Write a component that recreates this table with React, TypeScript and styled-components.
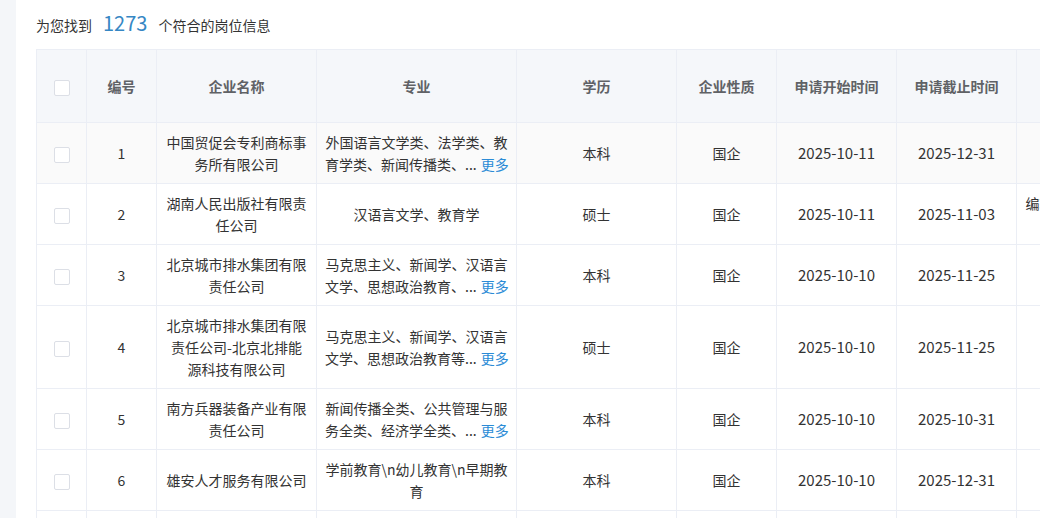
import React from "react";
import styled, { createGlobalStyle } from "styled-components";

const Global = createGlobalStyle`
  html, body { margin: 0; padding: 0; background: #f4f6f9; overflow: hidden; }
  body { font-family: "Noto Sans CJK SC", "Noto Sans", sans-serif; }
`;

const Page = styled.div`
  display: flex;
  width: 1040px;
  height: 518px;
  overflow: hidden;
  background: #f4f6f9;
`;

const Panel = styled.main`
  margin-left: 16px;
  flex: 1;
  min-width: 0;
  background: #fff;
  padding: 14px 0 0 20px;
  overflow: hidden;
`;

const Summary = styled.div`
  display: flex;
  align-items: center;
  height: 22px;
  margin-bottom: 13px;
  font-size: 14px;
  color: #333;
  white-space: nowrap;
`;

const Count = styled.span`
  font-size: 20px;
  color: #3687c4;
  margin: 0 11px 0 11px;
  line-height: 22px;
  position: relative;
  top: -2px;
`;

const Table = styled.table`
  border-collapse: collapse;
  table-layout: fixed;
  width: 1180px;
  font-size: 14px;
  color: #333;
`;

const Th = styled.th`
  height: 72px;
  padding: 0 8px;
  background: #f5f7fa;
  border: 1px solid #ebeef5;
  color: #606266;
  font-weight: bold;
  text-align: center;
  vertical-align: middle;
  white-space: nowrap;
  overflow: hidden;
`;

const Tr = styled.tr<{ $shade?: boolean }>`
  background: ${(p) => (p.$shade ? "#fafafa" : "#fff")};
`;

const Td = styled.td<{ $align?: string }>`
  padding: 8px 8px;
  border: 1px solid #ebeef5;
  line-height: 22px;
  text-align: ${(p) => p.$align || "center"};
  vertical-align: middle;
  word-break: break-all;
`;

const DateTd = styled(Td)`
  font-size: 15px;
`;

const Check = styled.span`
  display: inline-block;
  width: 14px;
  height: 14px;
  border: 1px solid #dcdfe6;
  border-radius: 2px;
  background: #fff;
  vertical-align: middle;
`;

const Line = styled.span`
  display: block;
  white-space: nowrap;
`;

const More = styled.a`
  color: #2b8bd6;
  cursor: pointer;
  margin-left: 4px;
`;

type Row = {
  no: number;
  company: string;
  major: string[] | string;
  edu: string;
  nature: string;
  start: string;
  end: string;
  extra: string;
};

const rows: Row[] = [
  { no: 1, company: "中国贸促会专利商标事务所有限公司", major: ["外国语言文学类、法学类、教", "育学类、新闻传播类、..."], edu: "本科", nature: "国企", start: "2025-10-11", end: "2025-12-31", extra: "专利代理" },
  { no: 2, company: "湖南人民出版社有限责任公司", major: "汉语言文学、教育学", edu: "硕士", nature: "国企", start: "2025-10-11", end: "2025-11-03", extra: "编辑记者、文字编辑、出版策划等岗位人员" },
  { no: 3, company: "北京城市排水集团有限责任公司", major: ["马克思主义、新闻学、汉语言", "文学、思想政治教育、..."], edu: "本科", nature: "国企", start: "2025-10-10", end: "2025-11-25", extra: "综合管理" },
  { no: 4, company: "北京城市排水集团有限责任公司-北京北排能源科技有限公司", major: ["马克思主义、新闻学、汉语言", "文学、思想政治教育等..."], edu: "硕士", nature: "国企", start: "2025-10-10", end: "2025-11-25", extra: "综合管理" },
  { no: 5, company: "南方兵器装备产业有限责任公司", major: ["新闻传播全类、公共管理与服", "务全类、经济学全类、..."], edu: "本科", nature: "国企", start: "2025-10-10", end: "2025-10-31", extra: "管理岗" },
  { no: 6, company: "雄安人才服务有限公司", major: "学前教育\\n幼儿教育\\n早期教育", edu: "本科", nature: "国企", start: "2025-10-10", end: "2025-12-31", extra: "幼师" },
  { no: 7, company: "中国电子科技集团有限公司", major: "计算机科学与技术、软件工程", edu: "本科", nature: "国企", start: "2025-10-10", end: "2025-12-31", extra: "研发" },
];

const widths = [50, 70, 160, 200, 160, 100, 120, 120, 200];
const heads = ["", "编号", "企业名称", "专业", "学历", "企业性质", "申请开始时间", "申请截止时间", "岗位名称"];

export default function App() {
  return (
    <>
      <Global />
      <Page>
        <Panel>
          <Summary>
            为您找到<Count>1273</Count>个符合的岗位信息
          </Summary>
          <Table>
            <colgroup>
              {widths.map((w, i) => (
                <col key={i} style={{ width: w }} />
              ))}
            </colgroup>
            <thead>
              <tr>
                {heads.map((h, i) => (
                  <Th key={i}>{i === 0 ? <Check /> : h}</Th>
                ))}
              </tr>
            </thead>
            <tbody>
              {rows.map((r) => (
                <Tr key={r.no} $shade={r.no === 1}>
                  <Td><Check /></Td>
                  <Td>{r.no}</Td>
                  <Td>{r.company}</Td>
                  <Td>
                    {Array.isArray(r.major) ? (
                      <>
                        <Line>{r.major[0]}</Line>
                        <Line>
                          {r.major[1]}
                          <More>更多</More>
                        </Line>
                      </>
                    ) : (
                      r.major
                    )}
                  </Td>
                  <Td>{r.edu}</Td>
                  <Td>{r.nature}</Td>
                  <DateTd>{r.start}</DateTd>
                  <DateTd>{r.end}</DateTd>
                  <Td>{r.extra}</Td>
                </Tr>
              ))}
            </tbody>
          </Table>
        </Panel>
      </Page>
    </>
  );
}
